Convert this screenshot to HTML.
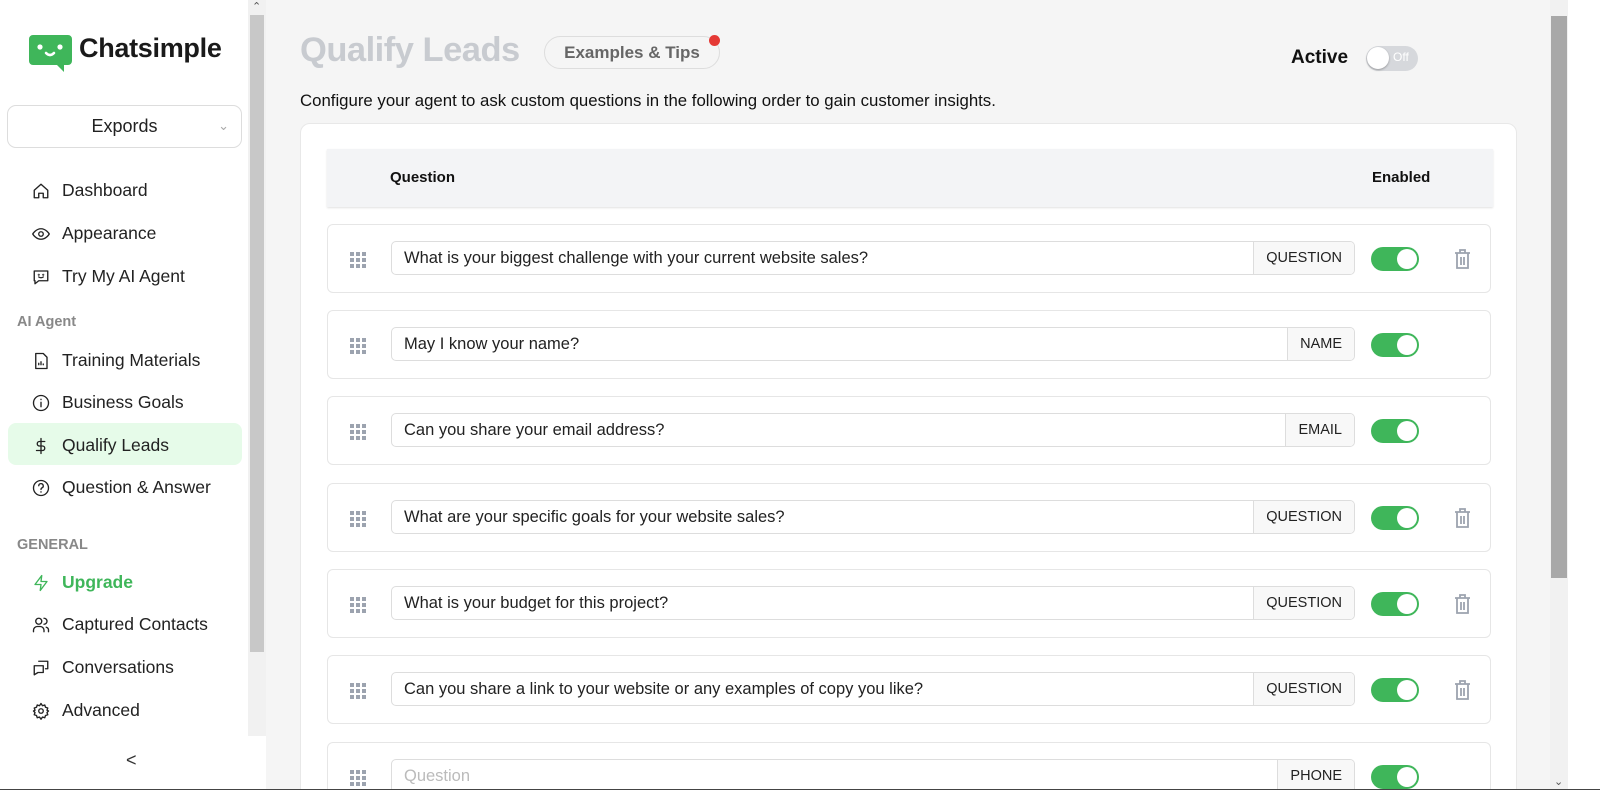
<!DOCTYPE html>
<html><head><meta charset="utf-8"><style>
*{box-sizing:border-box;margin:0;padding:0}
html,body{width:1600px;height:806px;overflow:hidden}
body{background:#fff;font-family:"Liberation Sans",sans-serif;position:relative;color:#111}
.side{position:absolute;left:0;top:0;width:248px;height:790px;background:#fff}
.sb{position:absolute;left:248px;top:0;width:18px;height:736px;background:#f1f1f1}
.sb .th{position:absolute;left:2px;top:15px;width:14px;height:637px;background:#c8c8c8}
.main{position:absolute;left:266px;top:0;width:1284px;height:790px;background:#f5f5f5;overflow:hidden}
.rsb{position:absolute;left:1550px;top:0;width:18px;height:790px;background:#f1f1f1}
.rsb .th{position:absolute;left:1px;top:16px;width:16px;height:562px;background:#a8a8a8}
.bot{position:absolute;left:0;top:789px;width:1600px;height:1px;background:#444}
.nav{position:absolute;left:32px;display:flex;align-items:center;font-size:17.5px;color:#222}
.nav svg{width:18px;height:18px;margin-right:12px;fill:none;stroke:#222;stroke-width:1.8;stroke-linecap:round;stroke-linejoin:round}
.sec{position:absolute;left:17px;font-size:14.5px;font-weight:bold;color:#888}
.card{position:absolute;left:34px;top:123px;width:1217px;height:700px;background:#fff;border:1px solid #e8e8e8;border-radius:10px}
.hdr{position:absolute;left:26px;top:25px;width:1166px;height:58px;background:#f3f4f6;box-shadow:0 1px 2px rgba(0,0,0,.12);font-weight:bold;font-size:15px}
.row{position:absolute;left:26px;width:1164px;height:69px;border:1px solid #e6e6e6;border-radius:6px;background:#fff}
.grip{position:absolute;left:22px;top:27px;width:16px;height:14px;display:grid;grid-template-columns:repeat(3,4px);gap:2px}
.grip i{background:#9ca3af;width:4px;height:4px}
.inp{position:absolute;left:63px;top:16px;width:964px;height:34px;border:1px solid #ddd;border-radius:5px;font-size:16.5px;line-height:33px;padding-left:12px;color:#222;overflow:hidden}
.tag{position:absolute;right:0;top:0;height:32px;background:#f8f8f8;border-left:1px solid #ddd;padding:0 12px;font-size:14.5px}
.tg{position:absolute;left:1043px;top:22px;width:48px;height:24px;border-radius:12px;background:#3fb65a}
.tg:after{content:"";position:absolute;right:2px;top:2px;width:20px;height:20px;border-radius:50%;background:#fff}
.tr{position:absolute;left:1126px;top:24px;width:17px;height:20px;fill:none;stroke:#9ca3af;stroke-width:1.8}
</style></head><body>
<div class="side">
 <svg style="position:absolute;left:29px;top:35px" width="43" height="37" viewBox="0 0 43 37"><path d="M4 0h35a4 4 0 0 1 4 4v22a4 4 0 0 1-4 4h-4v7l-7-7H4a4 4 0 0 1-4-4V4a4 4 0 0 1 4-4z" fill="#3fb65a"/><circle cx="11" cy="12" r="2.6" fill="#fff"/><circle cx="31" cy="12" r="2.6" fill="#fff"/><path d="M17 18q4 4 8 0" stroke="#fff" stroke-width="2.6" fill="none" stroke-linecap="round"/></svg>
 <div style="position:absolute;left:79px;top:33px;font-size:27px;font-weight:bold;color:#1a1a1a;letter-spacing:-0.3px">Chatsimple</div>
 <div style="position:absolute;left:7px;top:105px;width:235px;height:43px;border:1px solid #ddd;border-radius:9px;font-size:18px;text-align:center;line-height:41px;color:#222">Expords<span style="position:absolute;right:12px;top:-1px;color:#aaa;font-size:13px">&#8964;</span></div>
 <div class="nav" style="top:180px"><svg viewBox="0 0 24 24"><path d="M3 11l9-8 9 8v10h-6v-6H9v6H3z"/></svg>Dashboard</div>
 <div class="nav" style="top:223px"><svg viewBox="0 0 24 24"><path d="M1 12s4-7 11-7 11 7 11 7-4 7-11 7S1 12 1 12z"/><circle cx="12" cy="12" r="3"/></svg>Appearance</div>
 <div class="nav" style="top:266px"><svg viewBox="0 0 24 24"><path d="M3 4h18v13H9l-5 4v-4H3z"/><circle cx="9" cy="9" r=".5"/><circle cx="15" cy="9" r=".5"/><path d="M9 12q3 2 6 0"/></svg>Try My AI Agent</div>
 <div class="sec" style="top:314px">AI Agent</div>
 <div class="nav" style="top:350px"><svg viewBox="0 0 24 24"><path d="M5 2h10l5 5v15H5z"/><path d="M9 17v-2M12 17v-4M15 17v-1"/></svg>Training Materials</div>
 <div class="nav" style="top:392px"><svg viewBox="0 0 24 24"><circle cx="12" cy="12" r="10"/><path d="M12 11v6M12 7v.5"/></svg>Business Goals</div>
 <div style="position:absolute;left:8px;top:423px;width:234px;height:42px;background:#e6fbe9;border-radius:8px"></div>
 <div class="nav" style="top:435px"><svg viewBox="0 0 24 24"><path d="M12 2v20M17 6H10a3 3 0 0 0 0 6h4a3 3 0 0 1 0 6H6"/></svg>Qualify Leads</div>
 <div class="nav" style="top:477px"><svg viewBox="0 0 24 24"><circle cx="12" cy="12" r="10"/><path d="M9 9a3 3 0 1 1 4 3c-1 .5-1 1-1 2M12 17v.5"/></svg>Question &amp; Answer</div>
 <div class="sec" style="top:537px">GENERAL</div>
 <div class="nav" style="top:572px;color:#3fb65a;font-weight:bold"><svg viewBox="0 0 24 24" style="stroke:#3fb65a"><path d="M13 2L4 14h8l-1 8 9-12h-8z"/></svg>Upgrade</div>
 <div class="nav" style="top:614px"><svg viewBox="0 0 24 24"><circle cx="9" cy="7" r="4"/><path d="M2 21v-2a5 5 0 0 1 5-5h4a5 5 0 0 1 5 5v2M16 3a4 4 0 0 1 0 8M22 21v-2a4 4 0 0 0-3-4"/></svg>Captured Contacts</div>
 <div class="nav" style="top:657px"><svg viewBox="0 0 24 24"><path d="M9 3h12v10h-3M3 9h12v9H8l-5 3z"/></svg>Conversations</div>
 <div class="nav" style="top:700px"><svg viewBox="0 0 24 24"><circle cx="12" cy="12" r="3"/><path d="M12 2l2 3 3-1 1 3 3 1-1 3 2 1-2 2 1 3-3 1-1 3-3-1-2 3-2-3-3 1-1-3-3-1 1-3-2-2 2-1-1-3 3-1 1-3 3 1z"/></svg>Advanced</div>
 <div style="position:absolute;left:126px;top:750px;font-size:18px;color:#333">&lt;</div>
</div>
<div class="sb"><div class="th"></div><div style="position:absolute;left:4px;top:0;font-size:11px;color:#555">&#8963;</div></div>
<div class="main">
 <div style="position:absolute;left:34px;top:31px;font-size:34.5px;font-weight:bold;color:#c8cbd0;letter-spacing:-0.5px">Qualify Leads</div>
 <div style="position:absolute;left:278px;top:36px;width:176px;height:33px;border:1px solid #ddd;border-radius:17px;font-size:17px;font-weight:bold;color:#666;text-align:center;line-height:31px">Examples &amp; Tips</div>
 <div style="position:absolute;left:443px;top:35px;width:11px;height:11px;border-radius:50%;background:#e53935"></div>
 <div style="position:absolute;left:1025px;top:47px;font-size:19px;font-weight:bold;color:#111">Active</div>
 <div style="position:absolute;left:1100px;top:46px;width:52px;height:25px;border-radius:13px;background:#d6d8dc"><div style="position:absolute;left:1px;top:1px;width:22px;height:22px;border-radius:50%;background:#fff;box-shadow:0 1px 2px rgba(0,0,0,.3)"></div><span style="position:absolute;left:27px;top:4px;font-size:12px;color:#fff">Off</span></div>
 <div style="position:absolute;left:34px;top:91px;font-size:16.8px;color:#111">Configure your agent to ask custom questions in the following order to gain customer insights.</div>
<div class="card">
 <div class="hdr"><span style="position:absolute;left:63px;top:20px">Question</span><span style="position:absolute;left:1045px;top:20px">Enabled</span></div>
 <div class="row" style="top:100px"><div class="grip"><i></i><i></i><i></i><i></i><i></i><i></i><i></i><i></i><i></i></div><div class="inp">What is your biggest challenge with your current website sales?<span class="tag">QUESTION</span></div><div class="tg"></div><svg class="tr" viewBox="0 0 17 20"><path d="M1 4h15M6 4V1h5v3M3 4v15h11V4M7 8v8M10 8v8"/></svg></div>
 <div class="row" style="top:186px"><div class="grip"><i></i><i></i><i></i><i></i><i></i><i></i><i></i><i></i><i></i></div><div class="inp">May I know your name?<span class="tag">NAME</span></div><div class="tg"></div></div>
 <div class="row" style="top:272px"><div class="grip"><i></i><i></i><i></i><i></i><i></i><i></i><i></i><i></i><i></i></div><div class="inp">Can you share your email address?<span class="tag">EMAIL</span></div><div class="tg"></div></div>
 <div class="row" style="top:359px"><div class="grip"><i></i><i></i><i></i><i></i><i></i><i></i><i></i><i></i><i></i></div><div class="inp">What are your specific goals for your website sales?<span class="tag">QUESTION</span></div><div class="tg"></div><svg class="tr" viewBox="0 0 17 20"><path d="M1 4h15M6 4V1h5v3M3 4v15h11V4M7 8v8M10 8v8"/></svg></div>
 <div class="row" style="top:445px"><div class="grip"><i></i><i></i><i></i><i></i><i></i><i></i><i></i><i></i><i></i></div><div class="inp">What is your budget for this project?<span class="tag">QUESTION</span></div><div class="tg"></div><svg class="tr" viewBox="0 0 17 20"><path d="M1 4h15M6 4V1h5v3M3 4v15h11V4M7 8v8M10 8v8"/></svg></div>
 <div class="row" style="top:531px"><div class="grip"><i></i><i></i><i></i><i></i><i></i><i></i><i></i><i></i><i></i></div><div class="inp">Can you share a link to your website or any examples of copy you like?<span class="tag">QUESTION</span></div><div class="tg"></div><svg class="tr" viewBox="0 0 17 20"><path d="M1 4h15M6 4V1h5v3M3 4v15h11V4M7 8v8M10 8v8"/></svg></div>
 <div class="row" style="top:618px"><div class="grip"><i></i><i></i><i></i><i></i><i></i><i></i><i></i><i></i><i></i></div><div class="inp" style="color:#bbb">Question<span class="tag" style="color:#222">PHONE</span></div><div class="tg"></div></div>
</div>
</div>
<div class="rsb"><div class="th"></div><div style="position:absolute;left:4px;bottom:2px;font-size:11px;color:#555">&#8964;</div></div>
<div style="position:absolute;left:0;top:790px;width:1600px;height:16px;background:#fff"></div>
<div class="bot"></div>
</body></html>
